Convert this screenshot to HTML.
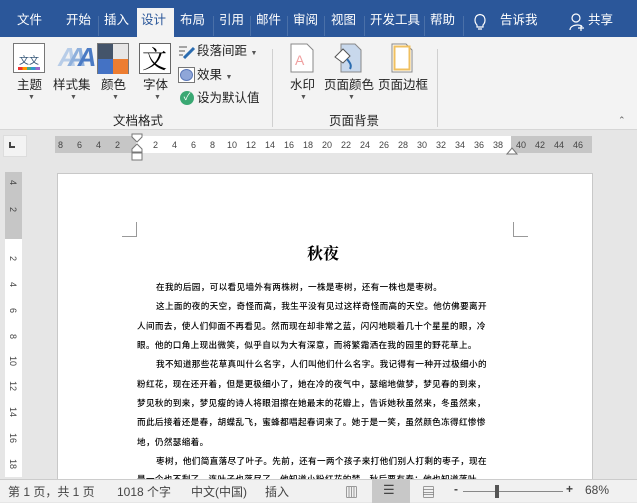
<!DOCTYPE html><html><head><meta charset="utf-8"><style>
*{margin:0;padding:0;box-sizing:border-box}
body{width:637px;height:502px;overflow:hidden;position:relative;background:#e6e6e6;font-family:"Liberation Sans","Noto Sans CJK SC",sans-serif;}
.a{position:absolute;white-space:nowrap}
#tabs{left:0;top:0;width:637px;height:37px;background:#2b579a}
.t{position:absolute;top:12px;color:#fff;font-size:12.5px;line-height:16px}
.sep{position:absolute;top:16px;width:1px;height:20px;background:#4a70a8}
#rib{left:0;top:37px;width:637px;height:93px;background:#f3f3f3;border-bottom:1px solid #d6d6d6}
.lb{position:absolute;font-size:12.5px;color:#222;line-height:14px}
.ar{position:absolute;font-size:7px;color:#555}
.p{position:absolute;left:137px;font-size:8.6px;color:#000;line-height:10px;letter-spacing:0.35px;font-family:"Noto Sans CJK SC",sans-serif;font-weight:500}
.rn{position:absolute;top:140px;font-size:9px;color:#444}
</style></head><body>
<div class="a" id="tabs">
<span class="t" style="left:17px">文件</span>
<span class="t" style="left:66px">开始</span>
<div class="sep" style="left:98px"></div>
<span class="t" style="left:104px">插入</span>
<div class="a" style="left:137px;top:8px;width:37px;height:29px;background:#f3f3f3"></div>
<span class="t" style="left:141px;color:#2b579a">设计</span>
<span class="t" style="left:180px">布局</span>
<div class="sep" style="left:213px"></div>
<span class="t" style="left:219px">引用</span>
<div class="sep" style="left:250px"></div>
<span class="t" style="left:256px">邮件</span>
<div class="sep" style="left:287px"></div>
<span class="t" style="left:293px">审阅</span>
<div class="sep" style="left:324px"></div>
<span class="t" style="left:331px">视图</span>
<div class="sep" style="left:364px"></div>
<span class="t" style="left:370px">开发工具</span>
<div class="sep" style="left:424px"></div>
<span class="t" style="left:430px">帮助</span>
<div class="sep" style="left:463px"></div>
<svg class="a" style="left:473px;top:13px" width="14" height="18" viewBox="0 0 14 18"><path d="M4 12 C1 9 1 2 7 1.5 C13 2 13 9 10 12 L10 14 H4 Z M5 16 H9" fill="none" stroke="#fff" stroke-width="1.2"/></svg>
<span class="t" style="left:500px">告诉我</span>
<svg class="a" style="left:569px;top:13px" width="16" height="18" viewBox="0 0 16 18"><circle cx="7" cy="5" r="4" fill="none" stroke="#fff" stroke-width="1.2"/><path d="M1 17 C1 11 13 11 13 14 M12 12 V18 M9 15 H15" fill="none" stroke="#fff" stroke-width="1.2"/></svg>
<span class="t" style="left:588px">共享</span>
</div>
<div class="a" id="rib">
<div class="a" style="left:272px;top:12px;width:1px;height:78px;background:#d0d0d0"></div>
<div class="a" style="left:437px;top:12px;width:1px;height:78px;background:#d0d0d0"></div>
<div class="a" style="left:13px;top:6px;width:32px;height:30px;border:1px solid #777;background:#fff"></div>
<div class="a" style="left:19px;top:15px;font-size:10px;color:#357;font-family:'Noto Sans CJK SC'">文文</div>
<div class="a" style="left:18px;top:30px;width:22px;height:3px;background:linear-gradient(90deg,#e33 0 20%,#f90 20% 40%,#4a8 40% 60%,#39c 60% 80%,#96c 80%)"></div>
<div class="a" style="left:58px;top:5px;font-size:26px;font-weight:bold;color:#4a7ac4;font-style:italic;letter-spacing:-9px"><span style="color:#b8cde8">A</span><span style="color:#8fb0dc">A</span>A</div>
<div class="a" style="left:97px;top:6px;width:32px;height:31px;border:1px solid #777">
<div class="a" style="left:0;top:0;width:15px;height:15px;background:#44546a"></div>
<div class="a" style="left:15px;top:0;width:15px;height:15px;background:#e7e6e6"></div>
<div class="a" style="left:0;top:15px;width:15px;height:15px;background:#4472c4"></div>
<div class="a" style="left:15px;top:15px;width:15px;height:15px;background:#ed7d31"></div></div>
<div class="a" style="left:139px;top:6px;width:32px;height:31px;border:1px solid #666;background:#fff"></div>
<div class="a" style="left:142px;top:6px;font-size:25px;line-height:30px;color:#000;font-family:'Noto Serif CJK SC',serif">文</div>
<div class="lb" style="left:17px;top:41px">主题</div>
<div class="lb" style="left:53px;top:41px">样式集</div>
<div class="lb" style="left:101px;top:41px">颜色</div>
<div class="lb" style="left:143px;top:41px">字体</div>
<div class="ar" style="left:28px;top:57px">▼</div><div class="ar" style="left:70px;top:57px">▼</div><div class="ar" style="left:112px;top:57px">▼</div><div class="ar" style="left:154px;top:57px">▼</div>
<svg class="a" style="left:178px;top:8px" width="18" height="14"><path d="M1 2H9M1 6H7M1 10H5" stroke="#555"/><path d="M6 13 L16 3" stroke="#2b6cb0" stroke-width="3"/></svg>
<div class="lb" style="left:197px;top:7px">段落间距 <span style="font-size:7px;color:#555">▼</span></div>
<div class="a" style="left:178px;top:30px;width:17px;height:16px;border:1px solid #777;background:#fff"><div style="margin:1px;width:13px;height:12px;border-radius:50%;background:#8fa6d8;border:1px solid #5b78b8"></div></div>
<div class="lb" style="left:197px;top:31px">效果 <span style="font-size:7px;color:#555">▼</span></div>
<div class="a" style="left:180px;top:54px;width:14px;height:14px;border-radius:50%;background:#3aa873;color:#fff;font-size:10px;line-height:14px;text-align:center">✓</div>
<div class="lb" style="left:197px;top:54px">设为默认值</div>
<div class="lb" style="left:113px;top:77px">文档格式</div>
<svg class="a" style="left:290px;top:6px" width="24" height="30"><path d="M1 1H17L23 7V29H1Z" fill="#fff" stroke="#888"/><text x="5" y="22" font-size="14" fill="#f0a0a0" font-family="Liberation Sans">A</text></svg>
<svg class="a" style="left:333px;top:6px" width="30" height="30"><path d="M8 1H22L28 7V29H8Z" fill="#c8d8ec" stroke="#888"/><path d="M2 14L10 6L17 13L10 20Z" fill="#fff" stroke="#555"/><path d="M14 16C17 20 19 22 17 26" stroke="#2b6cb0" stroke-width="2" fill="none"/></svg>
<svg class="a" style="left:391px;top:6px" width="22" height="30"><path d="M1 1H15L21 7V29H1Z" fill="#fff" stroke="#888"/><rect x="3.5" y="3.5" width="15" height="23" fill="none" stroke="#f0c060" stroke-width="2"/></svg>
<div class="lb" style="left:290px;top:41px">水印</div>
<div class="lb" style="left:324px;top:41px">页面颜色</div>
<div class="lb" style="left:378px;top:41px">页面边框</div>
<div class="ar" style="left:300px;top:57px">▼</div><div class="ar" style="left:348px;top:57px">▼</div>
<div class="lb" style="left:329px;top:77px">页面背景</div>
<div class="a" style="left:618px;top:78px;font-size:9px;color:#666">⌃</div>
</div>
<div class="a" style="left:0;top:131px;width:637px;height:29px;background:#e6e6e6"></div>
<div class="a" style="left:3px;top:135px;width:24px;height:22px;background:#f3f3f3;border:1px solid #ddd"></div>
<div class="a" style="left:9px;top:142px;width:6px;height:6px;border-left:2px solid #444;border-bottom:2px solid #444"></div>
<div class="a" style="left:55px;top:136px;width:537px;height:17px;background:#c6c6c6"></div>
<div class="a" style="left:136px;top:136px;width:375px;height:17px;background:#fff"></div>
<span class="rn" style="left:58px">8</span><span class="rn" style="left:77px">6</span><span class="rn" style="left:96px">4</span><span class="rn" style="left:115px">2</span>
<span class="rn" style="left:153px">2</span><span class="rn" style="left:172px">4</span><span class="rn" style="left:191px">6</span><span class="rn" style="left:210px">8</span>
<span class="rn" style="left:227px">10</span><span class="rn" style="left:246px">12</span><span class="rn" style="left:265px">14</span><span class="rn" style="left:284px">16</span><span class="rn" style="left:303px">18</span><span class="rn" style="left:322px">20</span><span class="rn" style="left:341px">22</span><span class="rn" style="left:360px">24</span><span class="rn" style="left:379px">26</span><span class="rn" style="left:398px">28</span><span class="rn" style="left:417px">30</span><span class="rn" style="left:436px">32</span><span class="rn" style="left:455px">34</span><span class="rn" style="left:474px">36</span><span class="rn" style="left:493px">38</span><span class="rn" style="left:516px">40</span><span class="rn" style="left:535px">42</span><span class="rn" style="left:554px">44</span><span class="rn" style="left:573px">46</span>
<svg class="a" style="left:130px;top:133px" width="14" height="28"><path d="M2 1H12V4L7 9L2 4Z M7 11L2 16V19H12V16Z M2 20H12V27H2Z" fill="#fff" stroke="#777"/></svg>
<svg class="a" style="left:506px;top:145px" width="12" height="10"><path d="M1 9L6 3L11 9Z" fill="#fff" stroke="#777"/></svg>
<div class="a" style="left:5px;top:172px;width:17px;height:305px;background:#fff"></div>
<div class="a" style="left:5px;top:172px;width:17px;height:67px;background:#c6c6c6"></div>
<div class="a" style="left:8px;top:180px;font-size:9px;color:#444;line-height:9px;writing-mode:vertical-rl">4</div>
<div class="a" style="left:8px;top:207px;font-size:9px;color:#444;writing-mode:vertical-rl">2</div>
<div class="a" style="left:8px;top:256px;font-size:9px;color:#444;writing-mode:vertical-rl">2</div>
<div class="a" style="left:8px;top:282px;font-size:9px;color:#444;writing-mode:vertical-rl">4</div>
<div class="a" style="left:8px;top:308px;font-size:9px;color:#444;writing-mode:vertical-rl">6</div>
<div class="a" style="left:8px;top:334px;font-size:9px;color:#444;writing-mode:vertical-rl">8</div>
<div class="a" style="left:8px;top:356px;font-size:9px;color:#444;writing-mode:vertical-rl">10</div>
<div class="a" style="left:8px;top:381px;font-size:9px;color:#444;writing-mode:vertical-rl">12</div>
<div class="a" style="left:8px;top:407px;font-size:9px;color:#444;writing-mode:vertical-rl">14</div>
<div class="a" style="left:8px;top:433px;font-size:9px;color:#444;writing-mode:vertical-rl">16</div>
<div class="a" style="left:8px;top:459px;font-size:9px;color:#444;writing-mode:vertical-rl">18</div>
<div class="a" style="left:57px;top:173px;width:536px;height:306px;background:#fff;border:1px solid #c8c8c8;border-bottom:none"></div>
<div class="a" style="left:122px;top:222px;width:15px;height:15px;border-right:1px solid #999;border-bottom:1px solid #999"></div>
<div class="a" style="left:513px;top:222px;width:15px;height:15px;border-left:1px solid #999;border-bottom:1px solid #999"></div>
<div class="a" style="left:307px;top:241px;font-size:16px;font-weight:bold;font-family:'Noto Serif CJK SC',serif;color:#000">秋夜</div>
<div class="p" style="left:156px;top:282px">在我的后园，可以看见墙外有两株树，一株是枣树，还有一株也是枣树。</div>
<div class="p" style="left:156px;top:301px">这上面的夜的天空，奇怪而高，我生平没有见过这样奇怪而高的天空。他仿佛要离开</div>
<div class="p" style="top:321px">人间而去，使人们仰面不再看见。然而现在却非常之蓝，闪闪地睒着几十个星星的眼，冷</div>
<div class="p" style="top:340px">眼。他的口角上现出微笑，似乎自以为大有深意，而将繁霜洒在我的园里的野花草上。</div>
<div class="p" style="left:156px;top:359px">我不知道那些花草真叫什么名字，人们叫他们什么名字。我记得有一种开过极细小的</div>
<div class="p" style="top:379px">粉红花，现在还开着，但是更极细小了，她在冷的夜气中，瑟缩地做梦，梦见春的到来，</div>
<div class="p" style="top:398px">梦见秋的到来，梦见瘦的诗人将眼泪擦在她最末的花瓣上，告诉她秋虽然来，冬虽然来，</div>
<div class="p" style="top:417px">而此后接着还是春，胡蝶乱飞，蜜蜂都唱起春词来了。她于是一笑，虽然颜色冻得红惨惨</div>
<div class="p" style="top:437px">地，仍然瑟缩着。</div>
<div class="p" style="left:156px;top:456px">枣树，他们简直落尽了叶子。先前，还有一两个孩子来打他们别人打剩的枣子，现在</div>
<div class="p" style="top:474px">是一个也不剩了，连叶子也落尽了。他知道小粉红花的梦，秋后要有春；他也知道落叶</div>
<div class="a" style="left:0;top:479px;width:637px;height:23px;background:#f1f1f1;border-top:1px solid #ccc;font-size:12px;color:#444">
<span class="a" style="left:8px;top:3px">第 1 页，共 1 页</span>
<span class="a" style="left:117px;top:3px">1018 个字</span>
<span class="a" style="left:191px;top:3px">中文(中国)</span>
<span class="a" style="left:265px;top:3px">插入</span>
<span class="a" style="left:345px;top:2px;font-size:13px">▥</span>
<div class="a" style="left:372px;top:0;width:38px;height:23px;background:#c8c8c8"></div>
<span class="a" style="left:383px;top:2px;font-size:13px">☰</span>
<span class="a" style="left:422px;top:2px;font-size:13px">▤</span>
<span class="a" style="left:454px;top:2px;font-weight:bold">-</span>
<div class="a" style="left:463px;top:11px;width:100px;height:1px;background:#888"></div>
<div class="a" style="left:495px;top:5px;width:4px;height:13px;background:#555"></div>
<span class="a" style="left:566px;top:2px;font-weight:bold">+</span>
<span class="a" style="left:585px;top:3px">68%</span>
</div>
</body></html>
